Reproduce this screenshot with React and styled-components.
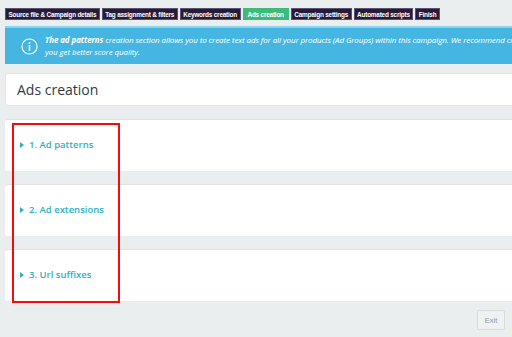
import styled, { createGlobalStyle } from 'styled-components';

const GlobalStyle = createGlobalStyle`
  html, body {
    margin: 0;
    padding: 0;
    background: #ebeeef;
    overflow: hidden;
  }
  body {
    font-family: 'Open Sans', 'Liberation Sans', sans-serif;
  }
`;

const steps = [
  'Source file & Campaign details',
  'Tag assignment & filters',
  'Keywords creation',
  'Ads creation',
  'Campaign settings',
  'Automated scripts',
  'Finish',
];

const sections = ['1. Ad patterns', '2. Ad extensions', '3. Url suffixes'];

const App = () => {
  return (
    <Page>
      <GlobalStyle />
      <StepBar>
        {steps.map((step) => (
          <Step key={step} $active={step === 'Ads creation'}>
            {step}
          </Step>
        ))}
      </StepBar>
      <InfoBanner>
        <InfoIcon viewBox="0 0 18 18">
          <circle cx="9" cy="9" r="8" fill="none" stroke="#fff" strokeWidth="1.2" />
          <circle cx="9" cy="5.2" r="1" fill="#fff" />
          <rect x="8.2" y="7.5" width="1.6" height="6" fill="#fff" />
        </InfoIcon>
        <InfoText>
          <b>The ad patterns</b> creation section allows you to create text ads for all your
          products (Ad Groups) within this campaign. We recommend creating several ad patterns so
          <br />
          you get better score quality.
        </InfoText>
      </InfoBanner>
      <TitleCard>
        <Title>Ads creation</Title>
      </TitleCard>
      <Sections>
        {sections.map((label) => (
          <SectionCard key={label}>
            <SectionToggle>
              <Caret />
              {label}
            </SectionToggle>
          </SectionCard>
        ))}
        <Highlight />
      </Sections>
      <Footer>
        <ExitButton>Exit</ExitButton>
      </Footer>
    </Page>
  );
};

export default App;

const Page = styled.div`
  width: 512px;
  height: 337px;
  padding: 8px 0 0 5px;
  box-sizing: border-box;
  overflow: hidden;
`;

const StepBar = styled.div`
  display: flex;
  gap: 2px;
  height: 12px;
`;

const Step = styled.div`
  height: 12px;
  box-sizing: border-box;
  padding: 0 ${(p) => (p.$active ? '4px' : '2.5px')};
  display: flex;
  align-items: center;
  font-family: 'Liberation Sans', sans-serif;
  font-size: 6.4px;
  font-weight: bold;
  letter-spacing: -0.2px;
  white-space: nowrap;
  color: #fff;
  background: ${(p) => (p.$active ? '#3fbb79' : '#261b38')};
  border: 1px solid ${(p) => (p.$active ? '#3fbb79' : '#5b5170')};
`;

const InfoBanner = styled.div`
  margin-top: 6px;
  width: 620px;
  height: 38px;
  box-sizing: border-box;
  background: #45b6e1;
  border-top: 2px solid #8fd4ee;
  display: flex;
  align-items: center;
  padding-left: 16px;
  gap: 7px;
`;

const InfoIcon = styled.svg`
  width: 17px;
  height: 17px;
  flex-shrink: 0;
`;

const InfoText = styled.div`
  color: #fff;
  font-family: 'Open Sans', sans-serif;
  font-style: italic;
  font-size: 8px;
  line-height: 12.5px;
  white-space: nowrap;
  letter-spacing: -0.1px;
`;

const TitleCard = styled.div`
  margin-top: 9px;
  height: 33px;
  width: 520px;
  box-sizing: border-box;
  background: #fff;
  border-radius: 3px;
  border: 1px solid #e3e6e7;
  display: flex;
  align-items: center;
  padding-left: 11px;
`;

const Title = styled.h1`
  margin: 0;
  font-family: 'Open Sans', sans-serif;
  font-weight: normal;
  font-size: 14px;
  color: #2e3a45;
`;

const Sections = styled.div`
  position: relative;
  margin-top: 13px;
  display: flex;
  flex-direction: column;
  gap: 13px;
`;

const SectionCard = styled.div`
  height: 52px;
  width: 520px;
  box-sizing: border-box;
  background: #fff;
  border-radius: 3px;
  border-top: 1px solid #e0e3e4;
  display: flex;
  align-items: center;
  padding: 0 0 2px 15px;
`;

const SectionToggle = styled.div`
  display: flex;
  align-items: center;
  gap: 5px;
  font-family: 'Open Sans', sans-serif;
  font-weight: 600;
  font-size: 9.5px;
  color: #2db0bf;
`;

const Caret = styled.span`
  width: 0;
  height: 0;
  border-top: 3.5px solid transparent;
  border-bottom: 3.5px solid transparent;
  border-left: 4px solid #2db0bf;
`;

const Highlight = styled.div`
  position: absolute;
  left: 7px;
  top: 4px;
  width: 108px;
  height: 180px;
  box-sizing: border-box;
  border: 2px solid #f40b0b;
  pointer-events: none;
`;

const Footer = styled.div`
  display: flex;
  justify-content: flex-end;
  padding: 9px 7px 0 0;
`;

const ExitButton = styled.button`
  width: 28px;
  height: 20px;
  padding: 0;
  box-sizing: border-box;
  background: #eff1f2;
  border: 1px solid #d9dcdd;
  border-radius: 2px;
  font-family: 'Liberation Sans', sans-serif;
  font-size: 7.5px;
  color: #8f9598;
`;
